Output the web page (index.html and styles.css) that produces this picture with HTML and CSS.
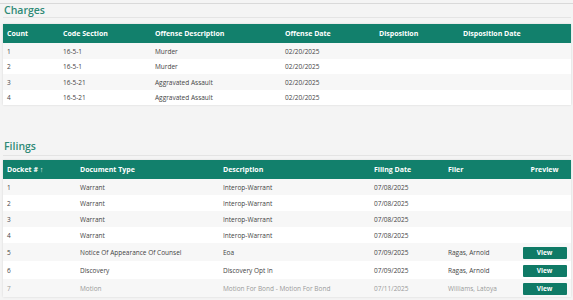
FILE: index.html
```html
<!DOCTYPE html>
<html>
<head>
<meta charset="utf-8">
<link rel="stylesheet" href="styles.css">
</head>
<body>
<div class="page">
  <section class="section charges">
    <h2 class="section-title">Charges</h2>
    <table class="grid">
      <colgroup>
        <col class="c-count"><col class="c-code"><col class="c-odesc"><col class="c-odate"><col class="c-disp"><col class="c-ddate">
      </colgroup>
      <thead>
        <tr><th>Count</th><th>Code Section</th><th>Offense Description</th><th>Offense Date</th><th>Disposition</th><th>Disposition Date</th></tr>
      </thead>
      <tbody>
        <tr><td>1</td><td>16-5-1</td><td>Murder</td><td>02/20/2025</td><td></td><td></td></tr>
        <tr><td>2</td><td>16-5-1</td><td>Murder</td><td>02/20/2025</td><td></td><td></td></tr>
        <tr><td>3</td><td>16-5-21</td><td>Aggravated Assault</td><td>02/20/2025</td><td></td><td></td></tr>
        <tr><td>4</td><td>16-5-21</td><td>Aggravated Assault</td><td>02/20/2025</td><td></td><td></td></tr>
      </tbody>
    </table>
  </section>
  <section class="section filings">
    <h2 class="section-title">Filings</h2>
    <table class="grid">
      <colgroup>
        <col class="c-docket"><col class="c-type"><col class="c-desc"><col class="c-fdate"><col class="c-filer"><col class="c-prev">
      </colgroup>
      <thead>
        <tr><th>Docket # <span class="sort">&#8593;</span></th><th>Document Type</th><th>Description</th><th>Filing Date</th><th>Filer</th><th class="center">Preview</th></tr>
      </thead>
      <tbody>
        <tr><td>1</td><td>Warrant</td><td>Interop-Warrant</td><td>07/08/2025</td><td></td><td></td></tr>
        <tr><td>2</td><td>Warrant</td><td>Interop-Warrant</td><td>07/08/2025</td><td></td><td></td></tr>
        <tr><td>3</td><td>Warrant</td><td>Interop-Warrant</td><td>07/08/2025</td><td></td><td></td></tr>
        <tr><td>4</td><td>Warrant</td><td>Interop-Warrant</td><td>07/08/2025</td><td></td><td></td></tr>
        <tr class="tall"><td>5</td><td>Notice Of Appearance Of Counsel</td><td>Eoa</td><td>07/09/2025</td><td>Ragas, Arnold</td><td class="center"><button class="view">View</button></td></tr>
        <tr class="tall"><td>6</td><td>Discovery</td><td>Discovery Opt In</td><td>07/09/2025</td><td>Ragas, Arnold</td><td class="center"><button class="view">View</button></td></tr>
        <tr class="tall dim"><td>7</td><td>Motion</td><td>Motion For Bond - Motion For Bond</td><td>07/11/2025</td><td>Williams, Latoya</td><td class="center"><button class="view">View</button></td></tr>
      </tbody>
    </table>
  </section>
</div>
</body>
</html>
```

FILE: styles.css
```css
html, body {
  margin: 0;
  padding: 0;
}
body {
  background: #f4f4f4;
  font-family: "Open Sans", "Liberation Sans", sans-serif;
  color: #333;
  width: 573px;
  height: 300px;
  overflow: hidden;
}
.page {
  border-top: 1px solid #d9d9d9;
  margin-top: 3px;
  padding: 0 2px 0 3px;
}
.section-title {
  margin: 0;
  font-size: 10.5px;
  font-weight: 600;
  color: #2f8a76;
  line-height: 12px;
  padding: 0 0 0 1px;
  height: 13px;
  border-bottom: 1px solid #e4e4e4;
}
.charges .section-title {
  margin-bottom: 6px;
}
.filings {
  margin-top: 34px;
}
.filings .section-title {
  box-sizing: border-box;
  height: 17px;
  padding-top: 1px;
  margin-bottom: 4px;
}
.grid {
  width: 568px;
  border-collapse: collapse;
  table-layout: fixed;
  background: #fff;
  box-shadow: 0 0 2px rgba(0,0,0,0.12);
}
.grid th {
  background: #12806c;
  color: #fff;
  font-weight: 700;
  font-size: 7px;
  text-align: left;
  padding: 0 4px;
  height: 19px;
  box-sizing: border-box;
}
.grid td {
  font-size: 6.5px;
  color: #444;
  padding: 1px 4px 0;
  height: 15.5px;
  box-sizing: border-box;
  white-space: nowrap;
}
.filings .grid td {
  height: 16px;
}
.grid tbody tr:nth-child(odd) td {
  background: #f7f7f7;
}
.filings .grid tr.tall td {
  height: 18px;
}
.grid tr.dim td {
  color: #9a9a9a;
}
.grid .center {
  text-align: center;
}
.sort {
  font-weight: 400;
}
.c-count { width: 56px; }
.c-code { width: 92px; }
.c-odesc { width: 130px; }
.c-odate { width: 94px; }
.c-disp { width: 84px; }
.c-ddate { width: 112px; }
.c-docket { width: 73px; }
.c-type { width: 143px; }
.c-desc { width: 151px; }
.c-fdate { width: 74px; }
.c-filer { width: 74px; }
.c-prev { width: 53px; }
.view {
  display: inline-block;
  width: 44px;
  height: 12px;
  border: 0;
  border-radius: 1px;
  background: #0f7a66;
  color: #fff;
  font-family: "Open Sans", "Liberation Sans", sans-serif;
  font-weight: 700;
  font-size: 6.5px;
  padding: 0;
  line-height: 12px;
  vertical-align: middle;
}
```
